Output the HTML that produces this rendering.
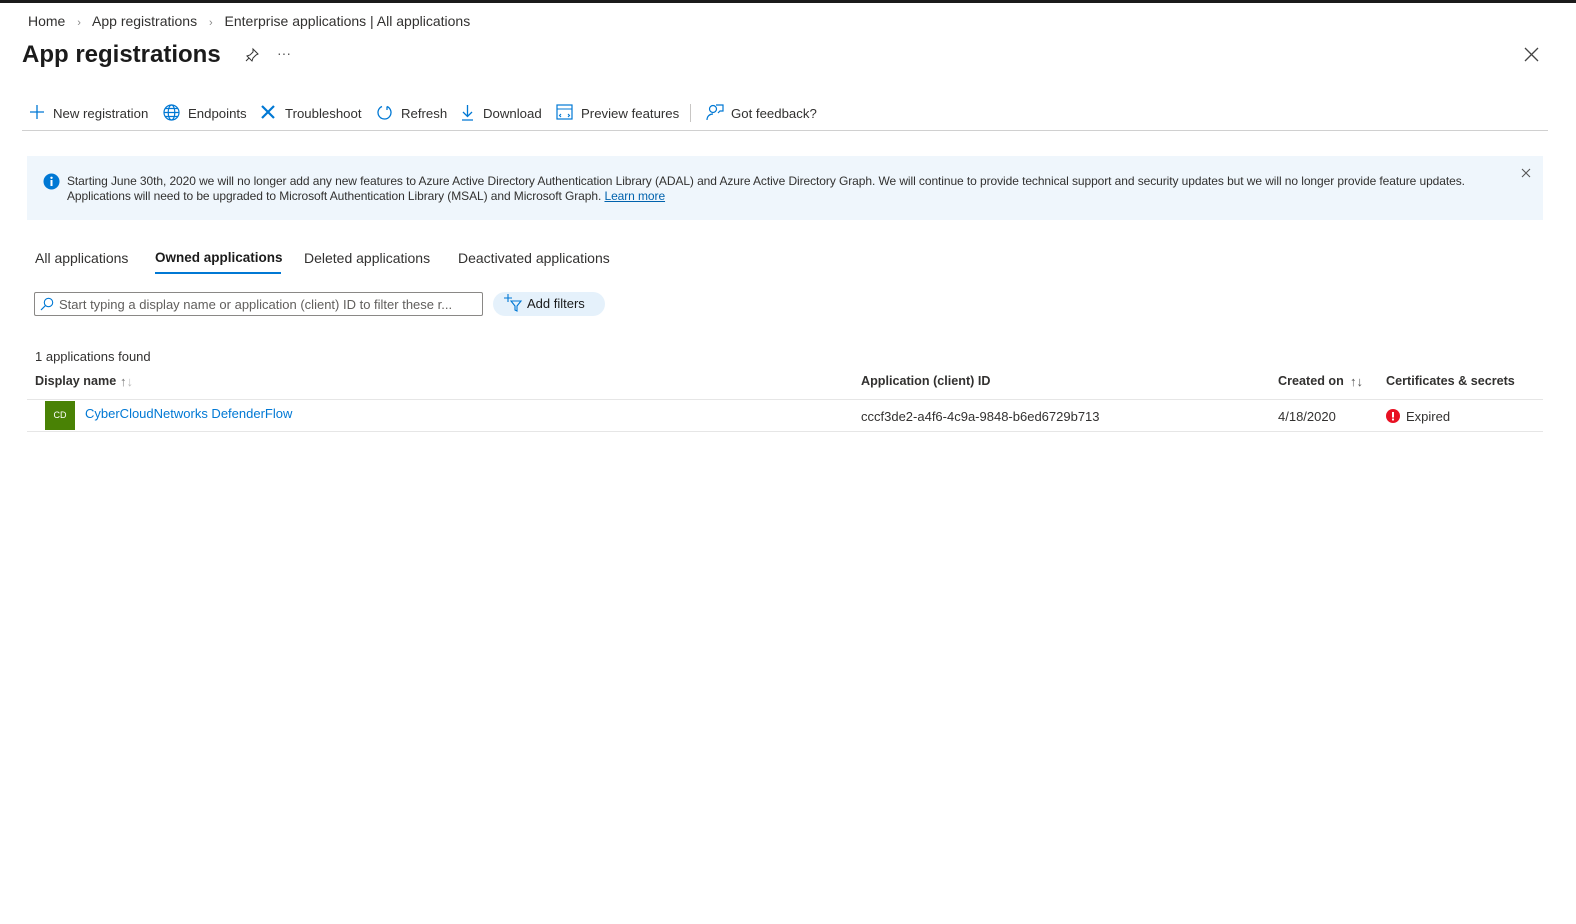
<!DOCTYPE html>
<html><head><meta charset="utf-8"><style>
*{margin:0;padding:0;box-sizing:border-box}
body{width:1576px;height:924px;background:#fff;font-family:"Liberation Sans",sans-serif;color:#323130;position:relative;overflow:hidden}
.a{position:absolute;white-space:nowrap}
.t{font-size:13.2px}
svg{position:absolute}
</style></head><body>
<div class="a" style="left:0;top:0;width:1576px;height:3px;background:#1b1b1b"></div>
<div class="a t" style="left:28px;top:13px;font-size:14px">Home <span style="color:#888;margin:0 8px;font-size:11px">›</span> App registrations <span style="color:#888;margin:0 8px;font-size:11px">›</span> Enterprise applications | All applications</div>
<div class="a" style="left:22px;top:41px;font-size:24px;font-weight:bold;color:#1b1b1b">App registrations</div>
<svg style="left:244px;top:47px" width="16" height="16" viewBox="0 0 16 16"><path d="M9 2l5 5-2 1-3 3-1 3-5-5 3-1 3-3zM5 11l-3 3" fill="none" stroke="#333" stroke-width="1"/></svg>
<div class="a" style="left:277px;top:45px;font-size:14px;color:#555">···</div>
<svg style="left:1524px;top:47px" width="15" height="15"><path d="M1 1l13 13M14 1L1 14" stroke="#444" stroke-width="1.3"/></svg>

<svg style="left:29px;top:104px" width="16" height="16"><path d="M8 1v14M1 8h14" stroke="#0078d4" stroke-width="1.3"/></svg>
<div class="a t" style="left:53px;top:106px">New registration</div>
<svg style="left:163px;top:104px" width="17" height="17" viewBox="0 0 17 17"><g fill="none" stroke="#0078d4" stroke-width="1.2"><circle cx="8.5" cy="8.5" r="7.5"/><ellipse cx="8.5" cy="8.5" rx="3.3" ry="7.5"/><path d="M1 8.5h15M2.5 4.5h12M2.5 12.5h12"/></g></svg>
<div class="a t" style="left:188px;top:106px">Endpoints</div>
<svg style="left:260px;top:104px" width="16" height="16"><path d="M2 2l12 12M14 2L2 14" stroke="#0078d4" stroke-width="2.2"/></svg>
<div class="a t" style="left:285px;top:106px">Troubleshoot</div>
<svg style="left:376px;top:104px" width="17" height="17"><path d="M6 2.5A6.5 6.5 0 1 0 11 2.5M11 2.5V6" fill="none" stroke="#0078d4" stroke-width="1.3"/></svg>
<div class="a t" style="left:401px;top:106px">Refresh</div>
<svg style="left:460px;top:104px" width="15" height="17"><path d="M7.5 1v11M3 8l4.5 4.5L12 8M2 16h11" fill="none" stroke="#0078d4" stroke-width="1.3"/></svg>
<div class="a t" style="left:483px;top:106px">Download</div>
<svg style="left:556px;top:104px" width="17" height="16"><rect x="1" y="1" width="15" height="14" fill="none" stroke="#0078d4" stroke-width="1.2"/><path d="M1 5h15M5 10l-1.5 1.5L5 13M12 10l1.5 1.5L12 13" fill="none" stroke="#0078d4" stroke-width="1.1"/></svg>
<div class="a t" style="left:581px;top:106px">Preview features</div>
<div class="a" style="left:690px;top:104px;width:1px;height:18px;background:#c8c6c4"></div>
<svg style="left:706px;top:103px" width="18" height="18"><circle cx="7" cy="6" r="3.5" fill="none" stroke="#0078d4" stroke-width="1.2"/><path d="M1 17c0-4 3-6 6-6M10 2h7v6h-3l-2 2" fill="none" stroke="#0078d4" stroke-width="1.2"/></svg>
<div class="a t" style="left:731px;top:106px">Got feedback?</div>
<div class="a" style="left:22px;top:130px;width:1526px;height:1px;background:#d0d0d0"></div>

<div class="a" style="left:27px;top:156px;width:1516px;height:64px;background:#eff6fc"></div>
<svg style="left:43px;top:173px" width="17" height="17"><circle cx="8.5" cy="8.5" r="8" fill="#0078d4"/><rect x="7.5" y="7" width="2" height="6" fill="#fff"/><circle cx="8.5" cy="4.8" r="1.2" fill="#fff"/></svg>
<div class="a" style="left:67px;top:174px;font-size:12px;line-height:15px;letter-spacing:-0.08px">Starting June 30th, 2020 we will no longer add any new features to Azure Active Directory Authentication Library (ADAL) and Azure Active Directory Graph. We will continue to provide technical support and security updates but we will no longer provide feature updates.<br>Applications will need to be upgraded to Microsoft Authentication Library (MSAL) and Microsoft Graph. <span style="color:#0062ad;text-decoration:underline">Learn more</span></div>
<svg style="left:1521px;top:168px" width="10" height="10"><path d="M1 1l8 8M9 1L1 9" stroke="#555" stroke-width="1.1"/></svg>

<div class="a" style="left:35px;top:250px;font-size:14px">All applications</div>
<div class="a" style="left:155px;top:250px;font-size:13.5px;font-weight:bold;color:#1b1b1b">Owned applications</div>
<div class="a" style="left:155px;top:272px;width:126px;height:2px;background:#0078d4"></div>
<div class="a" style="left:304px;top:250px;font-size:14px">Deleted applications</div>
<div class="a" style="left:458px;top:250px;font-size:14px">Deactivated applications</div>

<div class="a" style="left:34px;top:292px;width:449px;height:24px;border:1px solid #8a8886;border-radius:2px"></div>
<svg style="left:40px;top:297px" width="14" height="14"><circle cx="8.5" cy="5.5" r="4.2" fill="none" stroke="#0078d4" stroke-width="1.1"/><path d="M5.5 8.5L1 13" stroke="#0078d4" stroke-width="1.2"/></svg>
<div class="a" style="left:59px;top:297px;font-size:13px;color:#605e5c">Start typing a display name or application (client) ID to filter these r...</div>
<div class="a" style="left:493px;top:292px;width:112px;height:24px;border-radius:12px;background:#e5f1fb"></div>
<svg style="left:503px;top:294px" width="20" height="18"><path d="M1 4h8M5 0v8M8 7h10l-4 5v5l-2-1v-4z" fill="none" stroke="#0078d4" stroke-width="1.1"/></svg>
<div class="a" style="left:527px;top:296px;font-size:13px;color:#1b1b1b">Add filters</div>

<div class="a" style="left:35px;top:349px;font-size:13px">1 applications found</div>
<div class="a" style="left:35px;top:374px;font-size:12.6px;font-weight:bold">Display name</div>
<div class="a" style="left:120px;top:374px;font-size:13px;color:#777">↑<span style="color:#bbb">↓</span></div>
<div class="a" style="left:861px;top:374px;font-size:12.6px;font-weight:bold">Application (client) ID</div>
<div class="a" style="left:1278px;top:374px;font-size:12.6px;font-weight:bold">Created on</div>
<div class="a" style="left:1350px;top:374px;font-size:13px;color:#555">↑↓</div>
<div class="a" style="left:1386px;top:374px;font-size:12.6px;font-weight:bold">Certificates &amp; secrets</div>
<div class="a" style="left:27px;top:399px;width:1516px;height:1px;background:#e6e6e6"></div>
<div class="a" style="left:45px;top:401px;width:30px;height:29px;background:#498205;color:#fff;font-size:9px;text-align:center;line-height:29px">CD</div>
<div class="a" style="left:85px;top:406px;font-size:13px;color:#0078d4">CyberCloudNetworks DefenderFlow</div>
<div class="a" style="left:861px;top:409px;font-size:13px">cccf3de2-a4f6-4c9a-9848-b6ed6729b713</div>
<div class="a" style="left:1278px;top:409px;font-size:13px">4/18/2020</div>
<svg style="left:1386px;top:409px" width="14" height="14"><circle cx="7" cy="7" r="7" fill="#e81123"/><rect x="6" y="3" width="2" height="5.5" fill="#fff"/><circle cx="7" cy="10.5" r="1.1" fill="#fff"/></svg>
<div class="a" style="left:1406px;top:409px;font-size:13px">Expired</div>
<div class="a" style="left:27px;top:431px;width:1516px;height:1px;background:#e6e6e6"></div>
</body></html>
